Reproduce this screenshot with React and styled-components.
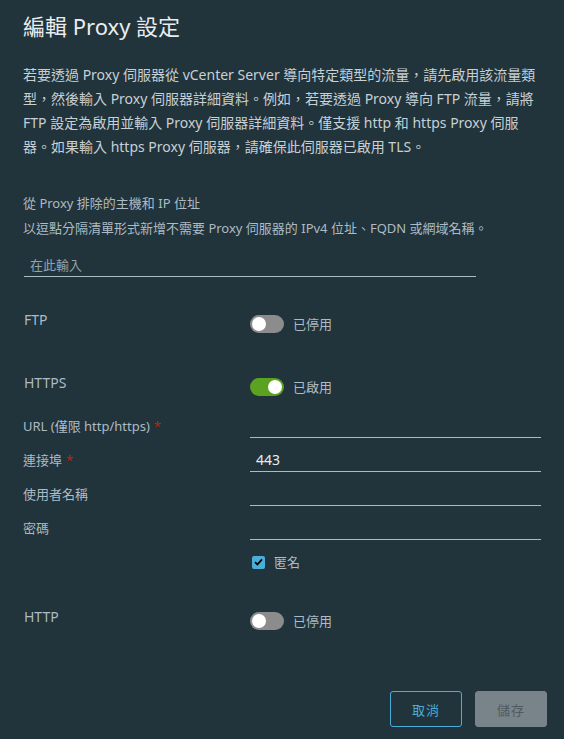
import React, { useState } from 'react';
import styled, { createGlobalStyle } from 'styled-components';

const COLORS = {
  bg: '#21333b',
  title: '#e9ecef',
  text: '#c7d0d5',
  label: '#adbbc4',
  line: '#acbac3',
  placeholder: '#95a3ab',
  value: '#eaedf0',
  required: '#c92100',
  toggleOff: '#8c8c8c',
  toggleOn: '#5aa220',
  primary: '#49afd9',
  disabledBg: '#79848a',
  disabledText: '#4f5a60'
};

const GlobalStyle = createGlobalStyle`
  html, body {
    margin: 0;
    padding: 0;
    background: ${COLORS.bg};
  }
  body {
    font-family: "Noto Sans", "Noto Sans CJK TC", sans-serif;
  }
  * {
    box-sizing: border-box;
  }
`;

const Modal = styled.div`
  width: 564px;
  min-height: 739px;
  background: ${COLORS.bg};
  display: flex;
  flex-direction: column;
`;

const Body = styled.div`
  padding: 12px 23px 0 24px;
`;

const Title = styled.h3`
  margin: 0;
  font-size: 22px;
  line-height: 28px;
  font-weight: 400;
  color: ${COLORS.title};
  margin-left: -1px;
`;

const Intro = styled.p`
  margin: 23px 0 0 -1px;
  font-size: 14px;
  line-height: 24px;
  color: ${COLORS.text};
`;

const Hint = styled.div`
  font-size: 13px;
  line-height: 25px;
  color: ${COLORS.label};
  margin-top: ${p => p.$top || 0}px;
  margin-left: -1px;
`;

const TextInput = styled.input`
  display: block;
  width: ${p => p.$width || '100%'};
  height: 24px;
  margin-top: ${p => p.$top || 0}px;
  padding: 0 6px;
  border: none;
  border-bottom: 1px solid ${COLORS.line};
  background: transparent;
  font-family: inherit;
  font-size: ${p => (p.$large ? 14 : 13)}px;
  color: ${COLORS.value};
  outline: none;

  &::placeholder {
    color: ${COLORS.placeholder};
  }
`;

const ToggleRow = styled.div`
  display: grid;
  grid-template-columns: 226px 1fr;
  margin-top: ${p => p.$top || 0}px;
`;

const SectionLabel = styled.div`
  font-size: 14px;
  line-height: 20px;
  color: ${COLORS.label};
`;

const ToggleWrap = styled.label`
  display: flex;
  align-items: center;
  gap: 9px;
  margin-top: 4px;
  cursor: pointer;
  font-size: 13px;
  color: ${COLORS.label};
`;

const Track = styled.span`
  position: relative;
  width: 34px;
  height: 18px;
  border-radius: 9px;
  background: ${p => (p.$on ? COLORS.toggleOn : COLORS.toggleOff)};

  &::after {
    content: '';
    position: absolute;
    top: 2px;
    left: ${p => (p.$on ? 18 : 2)}px;
    width: 14px;
    height: 14px;
    border-radius: 50%;
    background: #fff;
  }
`;

const Fields = styled.div`
  display: flex;
  flex-direction: column;
  gap: 10px;
  margin-top: 18px;
`;

const FieldRow = styled.div`
  display: grid;
  grid-template-columns: 226px 1fr;
  align-items: center;
`;

const FieldLabel = styled.label`
  font-size: 13px;
  line-height: 20px;
  color: ${COLORS.label};
  margin-left: -1px;
`;

const Required = styled.span`
  color: ${COLORS.required};
  margin-left: 4px;
`;

const CheckRow = styled.label`
  display: flex;
  align-items: center;
  gap: 9px;
  margin: 14px 0 0 228px;
  font-size: 13px;
  line-height: 16px;
  color: ${COLORS.label};
  cursor: pointer;
`;

const Box = styled.span`
  width: 13px;
  height: 13px;
  border-radius: 2px;
  background: ${COLORS.primary};
  display: flex;
  align-items: center;
  justify-content: center;
`;

const Footer = styled.div`
  display: flex;
  justify-content: flex-end;
  gap: 13px;
  padding: 61px 17px 10px;
`;

const Button = styled.button`
  width: 72px;
  height: 36px;
  border-radius: 3px;
  font-family: inherit;
  font-size: 13px;
  letter-spacing: 1px;
  cursor: pointer;
  border: 1px solid ${p => (p.$outline ? COLORS.primary : COLORS.disabledBg)};
  background: ${p => (p.$outline ? 'transparent' : COLORS.disabledBg)};
  color: ${p => (p.$outline ? COLORS.primary : COLORS.disabledText)};

  &:disabled {
    cursor: not-allowed;
  }
`;

function Toggle({ on, onChange }) {
  return (
    <ToggleWrap onClick={onChange}>
      <Track $on={on} />
      {on ? '已啟用' : '已停用'}
    </ToggleWrap>
  );
}

export default function App() {
  const [ftp, setFtp] = useState(false);
  const [https, setHttps] = useState(true);
  const [http, setHttp] = useState(false);

  return (
    <Modal>
      <GlobalStyle />
      <Body>
        <Title>編輯 Proxy 設定</Title>

        <Intro>
          若要透過 Proxy 伺服器從 vCenter Server 導向特定類型的流量，請先啟用該流量類型，然後輸入 Proxy
          伺服器詳細資料。例如，若要透過 Proxy 導向 FTP 流量，請將 FTP 設定為啟用並輸入 Proxy
          伺服器詳細資料。僅支援 http 和 https Proxy 伺服器。如果輸入 https Proxy 伺服器，請確保此伺服器已啟用 TLS。
        </Intro>

        <Hint $top={32}>從 Proxy 排除的主機和 IP 位址</Hint>
        <Hint>以逗點分隔清單形式新增不需要 Proxy 伺服器的 IPv4 位址、FQDN 或網域名稱。</Hint>
        <TextInput $top={12} $width="452px" placeholder="在此輸入" />

        <ToggleRow $top={33}>
          <SectionLabel>FTP</SectionLabel>
          <Toggle on={ftp} onChange={() => setFtp(!ftp)} />
        </ToggleRow>

        <ToggleRow $top={40}>
          <SectionLabel>HTTPS</SectionLabel>
          <Toggle on={https} onChange={() => setHttps(!https)} />
        </ToggleRow>

        <Fields>
          <FieldRow>
            <FieldLabel>
              URL (僅限 http/https)<Required>*</Required>
            </FieldLabel>
            <TextInput />
          </FieldRow>
          <FieldRow>
            <FieldLabel>
              連接埠<Required>*</Required>
            </FieldLabel>
            <TextInput $large defaultValue="443" />
          </FieldRow>
          <FieldRow>
            <FieldLabel>使用者名稱</FieldLabel>
            <TextInput />
          </FieldRow>
          <FieldRow>
            <FieldLabel>密碼</FieldLabel>
            <TextInput type="password" />
          </FieldRow>
        </Fields>

        <CheckRow>
          <Box>
            <svg width="9" height="8" viewBox="0 0 9 8">
              <path d="M1 4.2 L3.4 6.5 L8 1.4" fill="none" stroke="#000" strokeWidth="1.8" />
            </svg>
          </Box>
          匿名
        </CheckRow>

        <ToggleRow $top={37}>
          <SectionLabel>HTTP</SectionLabel>
          <Toggle on={http} onChange={() => setHttp(!http)} />
        </ToggleRow>
      </Body>

      <Footer>
        <Button $outline>取消</Button>
        <Button disabled>儲存</Button>
      </Footer>
    </Modal>
  );
}
